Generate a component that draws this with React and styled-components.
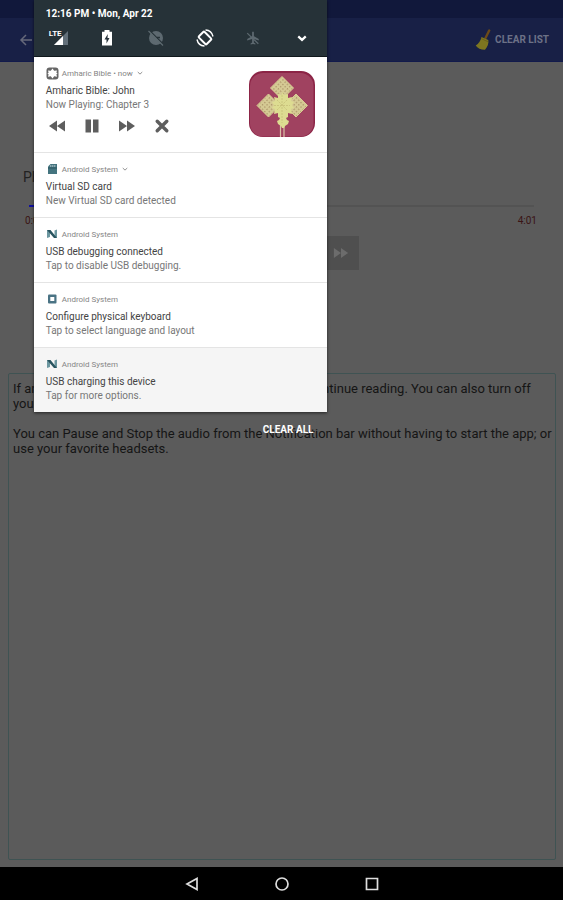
import React from 'react';
import styled, { createGlobalStyle } from 'styled-components';

const notifications = [
  {
    icon: 'sd',
    expandable: true,
    title: 'Virtual SD card',
    text: 'New Virtual SD card detected',
  },

  {
    icon: 'nougat',
    title: 'USB debugging connected',
    text: 'Tap to disable USB debugging.',
  },

  {
    icon: 'keyboard',
    title: 'Configure physical keyboard',
    text: 'Tap to select language and layout',
  },

  {
    icon: 'nougat',
    muted: true,
    title: 'USB charging this device',
    text: 'Tap for more options.',
  },
];

const RewindIcon = ({ size = 18 }) => (
  <svg width={size} height={size} viewBox="0 0 18 18" fill="currentColor">
    <path d="M9 3.5v11L1 9zM17 3.5v11L9 9z" />
  </svg>
);

const ForwardIcon = ({ size = 18 }) => (
  <svg width={size} height={size} viewBox="0 0 18 18" fill="currentColor">
    <path d="M1 3.5v11L9 9zM9 3.5v11L17 9z" />
  </svg>
);

const PauseIcon = ({ size = 18 }) => (
  <svg width={size} height={size} viewBox="0 0 18 18" fill="currentColor">
    <path d="M2.5 2.5h5.500v13h-5.500zM10 2.5h5.500v13h-5.500z" />
  </svg>
);

const StopIcon = () => (
  <svg width="18" height="18" viewBox="0 0 18 18" stroke="currentColor" strokeWidth="3.4" strokeLinecap="round">
    <path d="M4.2 4.2l9.6 9.6M13.8 4.2l-9.6 9.6" />
  </svg>
);

const Chevron = ({ width = 6, stroke = 1.2 }) => (
  <svg width={width} height={width} viewBox="0 0 8 8" fill="none" stroke="currentColor" strokeWidth={stroke}>
    <path d="M1 2.7l3 2.8 3-2.8" />
  </svg>
);

const BroomIcon = () => (
  <svg width="16" height="22" viewBox="0 0 16 22">
    <path d="M14.200 1.500L10.500 9" stroke="#6b4a18" strokeWidth="2.400" strokeLinecap="round" />
    <path d="M6.500 8l6.800 3c.6 3.500-.8 7-3.300 9.800C6.500 21 2.500 19.500.7 16.500c3-1.800 4.900-4.500 5.800-8.500z" fill="#7d7620" />
    <path d="M6.200 9.600l7 3.200" stroke="#6b621a" />
  </svg>
);

const smallIcons = {
  app: (
    <svg width="13" height="13" viewBox="0 0 13 13">
      <rect x=".5" y=".5" width="12" height="12" rx="3" fill="#666" />
      <path d="M6.500 1.500l1.700 2.300 2.800-.4-.6 2.400 1.200.7-1.200.7.6 2.500-2.800-.4-1.700 2.300-1.700-2.300-2.800.4.6-2.500-1.200-.7 1.200-.7-.6-2.400 2.800.4z" fill="#fff" />
    </svg>
  ),
  sd: (
    <svg width="13" height="12" viewBox="0 0 13 12">
      <path d="M4.500 1H11v10H2V3.500z" fill="#44747f" />
      <path d="M4.800 2v2M6.800 2v2M8.800 2v2" stroke="#c5d6da" strokeWidth=".8" />
      <path d="M2 5h9" stroke="#2b5561" />
    </svg>
  ),
  nougat: (
    <svg width="13" height="12" viewBox="0 0 13 12">
      <path d="M1 2l3 1v6l-3 1zM8.500 2.500L11 1.500v8.500L8.500 9z" fill="#6c97a0" />
      <path d="M1 2h3.500l6.500 8H8z" fill="#28545f" />
    </svg>
  ),
  keyboard: (
    <svg width="13" height="12" viewBox="0 0 13 12">
      <rect x="2" y="1.500" width="8.500" height="9" rx="1" fill="#4a7384" />
      <path d="M4.300 4h4v4h-4z" fill="#fff" />
    </svg>
  ),
};

// Ethiopian cross on the app artwork
const CrossArt = () => (
  <svg width="66" height="66" viewBox="0 0 66 66">
    <defs>
      <pattern id="weave" width="3.200" height="3.200" patternUnits="userSpaceOnUse" patternTransform="rotate(45)">
        <rect width="3.200" height="3.200" fill="#d5ca94" />
        <path d="M.8 .8h1.300v1.300H.8z" fill="#b09a6c" />
      </pattern>
    </defs>
    <rect width="66" height="66" rx="14" fill="#8c2446" />
    <rect x="1" y="2" width="63.500" height="63.500" rx="13" fill="#a04260" />
    <path d="M31.500 52v14M35 52v14" stroke="#d9c0a6" strokeWidth="1.200" />
    <g fill="url(#weave)" stroke="#d8cd94" strokeWidth="1">
      <path d="M33 5.500L44.500 17 33 28.500 21.500 17z" />
      <path d="M19.500 23L31 34.500 19.500 46 8 34.500z" />
      <path d="M47 23L58.500 34.500 47 46 35.500 34.500z" />
    </g>
    <path
      d="M33 21l2 3 4-1v4l4-1-1 4 3 1-2 3 2 3-3 1 1 5-4-1v4l-2 1 1 2 2 1-1 3-3 2-1 2h-2l-1-2-3-2-1-3 2-1 1-2-2-1v-4l-4 1 1-5-3-1 2-3-2-3 3-1-1-4 4 1v-4l4 1z"
      fill="#dddc91"
    />
    <path d="M33 24v28M25 34.500h16M28 29l10 10M38 29L28 39" stroke="#c6bf78" strokeWidth=".8" strokeDasharray="2 1" />
  </svg>
);

const NotificationHeader = ({ icon, name, expandable }) => (
  <RowHeader>
    <IconSlot>{smallIcons[icon]}</IconSlot>
    <span>{name}</span>
    {expandable && <Chevron />}
  </RowHeader>
);

const StatusTiles = () => (
  <Tiles>
    <Tile aria-label="Mobile network">
      <Lte>LTE</Lte>
      <svg width="14" height="14" viewBox="0 0 14 14">
        <path d="M14 0v14H0z" fill="#63707a" />
        <path d="M9 5v9H0z" fill="#fff" />
      </svg>
    </Tile>
    <Tile aria-label="Battery">
      <svg width="16" height="18" viewBox="0 0 16 18">
        <path d="M5.500 1h5v1.800H13V16.500H3V2.800h2.500z" fill="#fff" />
        <path d="M8.800 5L5.500 10.500h2V14.500l3-5.500h-2z" fill="#26323a" />
      </svg>
    </Tile>
    <Tile aria-label="Do not disturb">
      <svg width="18" height="18" viewBox="0 0 18 18">
        <circle cx="9" cy="9" r="7" fill="#5d6970" />
        <path d="M2.500 1.500l14 14" stroke="#263238" strokeWidth="1.500" />
        <path d="M1.500 2l14.500 14.500" stroke="#5d6970" strokeWidth="1.200" />
        <path d="M10 8.500h3" stroke="#263238" strokeWidth="1.500" />
      </svg>
    </Tile>
    <Tile aria-label="Auto-rotate">
      <svg width="20" height="20" viewBox="0 0 20 20" fill="none" stroke="#fff">
        <rect x="6" y="4.500" width="8" height="11" rx="1" strokeWidth="2" transform="rotate(-45 10 10)" />
        <path d="M2 11.500A8.200 8.200 0 0 0 9.500 18M18 8.500A8.200 8.200 0 0 0 10.500 2" strokeWidth="1.400" />
      </svg>
    </Tile>
    <Tile aria-label="Airplane mode">
      <svg width="16" height="16" viewBox="0 0 18 18" fill="#5d6970">
        <path d="M8 2.500q1-1.800 2 0V7l5.500 3v1.700L10 10v4l1.700 1.200v1.200L9 15.700l-2.700.7v-1.200L8 14v-4l-5.500 1.700V10L8 7z" />
        <path d="M2.500 3.500l12.500 12" stroke="#5d6970" strokeWidth="1.400" />
      </svg>
    </Tile>
    <Tile aria-label="Expand quick settings">
      <Chevron width={10} stroke={1.8} />
    </Tile>
  </Tiles>
);

const Shade = () => (
  <ShadeContainer>
    <ShadePanel>
      <QuickSettings>
        <DateLine>12:16 PM • Mon, Apr 22</DateLine>
        <StatusTiles />
      </QuickSettings>

      <MediaRow>
        <MediaBody>
          <NotificationHeader icon="app" name="Amharic Bible • now" expandable />
          <RowTitle>Amharic Bible: John</RowTitle>
          <RowText>Now Playing: Chapter 3</RowText>
          <MediaActions>
            <MediaButton aria-label="Rewind"><RewindIcon /></MediaButton>
            <MediaButton aria-label="Pause"><PauseIcon /></MediaButton>
            <MediaButton aria-label="Forward"><ForwardIcon /></MediaButton>
            <MediaButton aria-label="Stop"><StopIcon /></MediaButton>
          </MediaActions>
        </MediaBody>
        <CrossArt />
      </MediaRow>

      {notifications.map((item) => (
        <Row key={item.title} $muted={item.muted}>
          <NotificationHeader icon={item.icon} name="Android System" expandable={item.expandable} />
          <RowTitle>{item.title}</RowTitle>
          <RowText>{item.text}</RowText>
        </Row>
      ))}
    </ShadePanel>
    <ClearAll>CLEAR ALL</ClearAll>
  </ShadeContainer>
);

const App = () => {
  return (
    <Page>
      <GlobalStyle />
      <StatusBar />
      <Toolbar>
        <ToolbarButton aria-label="Back">
          <svg width="14" height="14" viewBox="0 0 14 14" fill="none" stroke="#65687a" strokeWidth="1.500">
            <path d="M13 7H2M7 2L2 7l5 5" />
          </svg>
        </ToolbarButton>
        <ToolbarButton>
          <BroomIcon />
          CLEAR LIST
        </ToolbarButton>
      </Toolbar>

      <Content>
        <Player>
          <Heading>Playing</Heading>
          <Seek type="range" min="0" max="241" defaultValue="0" aria-label="Position" />
          <Times>
            <span>0:00</span>
            <span>4:01</span>
          </Times>
          <Controls>
            <ControlButton aria-label="Previous"><RewindIcon size={16} /></ControlButton>
            <ControlButton aria-label="Pause audio"><PauseIcon size={16} /></ControlButton>
            <ControlButton aria-label="Stop audio"><PauseIcon size={16} /></ControlButton>
            <ControlButton aria-label="Next"><ForwardIcon size={16} /></ControlButton>
          </Controls>
        </Player>

        <Hint>
          <p>
            If any app stops its audio, tap on the Play button to continue reading. You can also turn off
            your screen.
          </p>
          <p>
            You can Pause and Stop the audio from the Notification bar without having to start the app; or use
            your favorite headsets.
          </p>
        </Hint>
      </Content>

      <NavBar>
        <NavButton aria-label="Back">
          <svg width="14" height="14" viewBox="0 0 14 14"><path d="M12 1.500v11L2 7z" /></svg>
        </NavButton>
        <NavButton aria-label="Home">
          <svg width="14" height="14" viewBox="0 0 14 14"><circle cx="7" cy="7" r="6" /></svg>
        </NavButton>
        <NavButton aria-label="Overview">
          <svg width="14" height="14" viewBox="0 0 14 14"><path d="M1.500 1.500h11v11h-11z" /></svg>
        </NavButton>
      </NavBar>

      <Shade />
    </Page>
  );
};

export default App;

const GlobalStyle = createGlobalStyle`
  * {
    box-sizing: border-box;
  }

  body {
    margin: 0;
    font-family: Roboto, "Liberation Sans", sans-serif;
  }

  button {
    border: none;
    padding: 0;
    background: none;
    font-family: inherit;
    color: inherit;
  }

  p {
    margin: 0;
  }

  svg {
    display: block;
    flex-shrink: 0;
  }
`;

const Page = styled.div`
  position: relative;
  min-height: 100vh;
  display: flex;
  flex-direction: column;
  background-color: #5b5b5b;
`;

const StatusBar = styled.div`
  height: 18px;
  background-color: #11183b;
`;

const Toolbar = styled.header`
  height: 44px;
  padding: 0 14px 0 19px;
  display: flex;
  justify-content: space-between;
  align-items: center;
  background-color: #182046;
  border-bottom: 1px solid #121a4c;
`;

const ToolbarButton = styled.button`
  display: flex;
  align-items: center;
  gap: 4px;
  font-size: 10px;
  font-weight: 700;
  color: #6c7186;
`;

const Content = styled.main`
  flex: 1;
  display: flex;
  flex-direction: column;
  padding: 106px 7px 7px 8px;
`;

const Player = styled.section`
  display: flex;
  flex-direction: column;
  padding: 0 18px 0 15px;
  margin-bottom: 103px;
`;

const Heading = styled.h1`
  margin: 0;
  font-size: 14px;
  line-height: 18px;
  font-weight: 400;
  color: #222;
`;

const Seek = styled.input`
  appearance: none;
  margin: 12px 4px 0 6px;
  height: 16px;
  background: transparent;

  &::-webkit-slider-runnable-track {
    height: 2px;
    background-color: #535353;
  }

  &::-webkit-slider-thumb {
    appearance: none;
    width: 6px;
    height: 2px;
    background-color: #1010a0;
  }
`;

const Times = styled.div`
  display: flex;
  justify-content: space-between;
  padding: 0 1px 0 2px;
  font-size: 10px;
  line-height: 14px;
  color: #3a1414;
`;

const Controls = styled.div`
  display: flex;
  justify-content: center;
  gap: 4px;
  margin-top: 8px;
`;

const ControlButton = styled.button`
  width: 36px;
  height: 34px;
  display: flex;
  justify-content: center;
  align-items: center;
  background-color: #4f4f4f;
  color: #6c6c6c;
`;

const Hint = styled.section`
  flex: 1;
  display: flex;
  flex-direction: column;
  gap: 15px;
  padding: 7px 0 7px 4px;
  border: 1px solid #3f5353;
  border-radius: 2px;
  font-size: 13px;
  line-height: 15px;
  color: #151515;
`;

const NavBar = styled.nav`
  height: 33px;
  display: flex;
  justify-content: center;
  align-items: center;
  gap: 76px;
  background-color: #000;
`;

const NavButton = styled.button`
  svg {
    fill: none;
    stroke: #ddd;
    stroke-width: 1.7;
  }
`;

const ShadeContainer = styled.aside`
  position: absolute;
  top: 0;
  left: 6%;
  width: 52%;
  display: flex;
  flex-direction: column;
  align-items: flex-end;
`;

const ShadePanel = styled.div`
  width: 100%;
  background-color: #fff;
  box-shadow: 0 1px 3px rgba(0, 0, 0, 0.6);
`;

const QuickSettings = styled.div`
  height: 57px;
  padding-top: 6px;
  background-color: #263238;
  border-bottom: 1px solid #10181c;
  color: #fff;
`;

const DateLine = styled.div`
  padding-left: 12px;
  font-size: 10px;
  line-height: 15px;
  font-weight: 700;
`;

const Tiles = styled.div`
  display: grid;
  grid-template-columns: repeat(6, 1fr);
  height: 34px;
`;

const Tile = styled.button`
  display: flex;
  justify-content: center;
  align-items: center;
`;

const Lte = styled.span`
  align-self: flex-start;
  margin: 9px -8px 0 0;
  font-size: 8px;
  line-height: 8px;
  font-weight: 700;
`;

const Row = styled.article`
  padding: 10px 12px;
  border-top: 1px solid #e4e4e4;
  background-color: ${(props) => (props.$muted ? '#f5f5f5' : '#fff')};
`;

const MediaRow = styled.article`
  display: flex;
  justify-content: space-between;
  align-items: flex-start;
  padding: 10px 12px 15px;

  > svg {
    margin-top: 4px;
  }
`;

const MediaBody = styled.div`
  flex: 1;
`;

const RowHeader = styled.div`
  display: flex;
  align-items: center;
  gap: 4px;
  height: 12px;
  margin-bottom: 5px;
  font-size: 8px;
  color: #858585;
`;

const IconSlot = styled.span`
  width: 12px;
`;

const RowTitle = styled.div`
  font-size: 10px;
  line-height: 14px;
  color: #444;
`;

const RowText = styled.div`
  font-size: 10px;
  line-height: 13px;
  color: #777;
`;

const MediaActions = styled.div`
  display: flex;
  gap: 13px;
  margin-top: 5px;
`;

const MediaButton = styled.button`
  width: 22px;
  height: 20px;
  display: flex;
  justify-content: center;
  align-items: center;
  color: #5e5e5e;
`;

const ClearAll = styled.button`
  margin: 10px 13px 0 0;
  font-size: 10px;
  line-height: 16px;
  font-weight: 700;
  color: #fff;
`;
